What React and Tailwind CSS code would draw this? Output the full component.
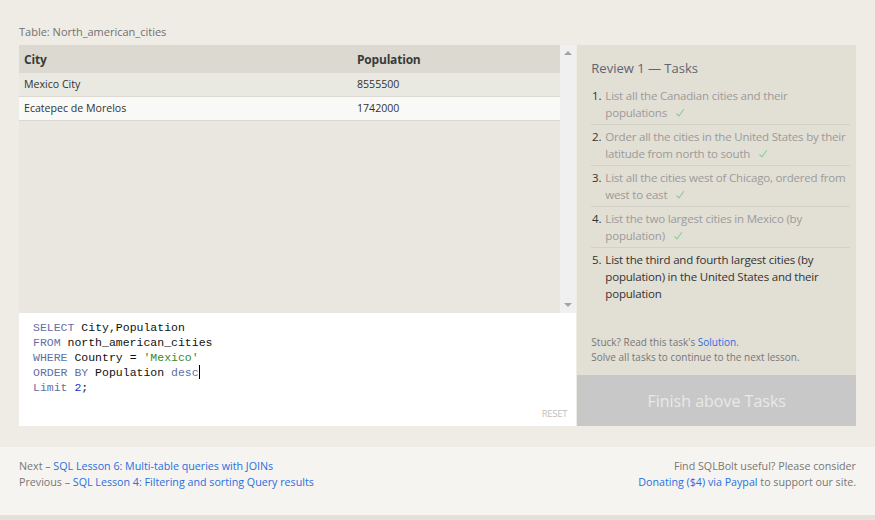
const tasks = [
    { lines: ["List all the Canadian cities and their", "populations"], done: true },
    { lines: ["Order all the cities in the United States by their", "latitude from north to south"], done: true },
    { lines: ["List all the cities west of Chicago, ordered from", "west to east"], done: true },
    { lines: ["List the two largest cities in Mexico (by", "population)"], done: true },
    { lines: ["List the third and fourth largest cities (by", "population) in the United States and their", "population"], done: false },
];

const rows = [
    { city: "Mexico City", pop: "8555500" },
    { city: "Ecatepec de Morelos", pop: "1742000" },
];

function Kw({ children }) {
    return <span className="text-[#6470a4]">{children}</span>;
}

function Check() {
    return (
        <svg viewBox="0 0 10 10" className="inline-block w-[10px] h-[10px] ml-[8px] align-[-1px]">
            <path d="M1.5 5.5 L4 8 L8.8 1.2" fill="none" stroke="#86cf95" strokeWidth="1.1" />
        </svg>
    );
}

export default function App() {
    return (
        <div className="w-[875px] h-[520px] bg-[#efede6] font-['Open_Sans','Noto_Sans',sans-serif] flex flex-col overflow-hidden">
            <div className="h-[447px] bg-[#efece5] rounded-bl-[6px] px-[19px] pt-[24px]">
                <div className="text-[11px] text-[#707070] leading-[16px] mb-[5px]">Table: North_american_cities</div>

                <div className="flex">
                    {/* Left: results + editor */}
                    <div className="w-[558px] flex flex-col">
                        <div className="h-[268px] bg-[#e9e7df] flex">
                            <div className="flex-1">
                                <div className="flex h-[28px] pt-px items-center bg-[#dcdad0] text-[12px] font-bold text-[#3a3a3a] tracking-[-0.2px]">
                                    <div className="w-[338px] pl-[5px]">City</div>
                                    <div className="flex-1">Population</div>
                                </div>
                                {rows.map((r, i) => (
                                    <div
                                        key={r.city}
                                        className={
                                            "flex h-[24px] items-center text-[10.6px] text-[#333] border-b border-[#dad8d0] " +
                                            (i % 2 === 1 ? "bg-[#f9f9f8]" : "bg-[#e9e8e1]")
                                        }
                                    >
                                        <div className="w-[338px] pl-[5px]">{r.city}</div>
                                        <div className="flex-1">{r.pop}</div>
                                    </div>
                                ))}
                            </div>
                            <div className="w-[16px] bg-[#f0f0f0] flex flex-col justify-between items-center py-[6px]">
                                <div className="w-0 h-0 border-x-[4px] border-x-transparent border-b-[4px] border-b-[#a3a3a3]"></div>
                                <div className="w-0 h-0 border-x-[4px] border-x-transparent border-t-[4px] border-t-[#a3a3a3]"></div>
                            </div>
                        </div>

                        <div className="h-[113px] bg-white relative pl-[14px] pt-[7px] font-['Liberation_Mono','DejaVu_Sans_Mono',monospace] text-[11.5px] leading-[15px] text-[#111]">
                            <div><Kw>SELECT</Kw> City,Population</div>
                            <div><Kw>FROM</Kw> north_american_cities</div>
                            <div><Kw>WHERE</Kw> Country = <span className="text-[#3a8a2a]">'Mexico'</span></div>
                            <div>
                                <Kw>ORDER BY</Kw> Population <Kw>desc</Kw>
                                <span className="inline-block w-px h-[14px] bg-black align-middle -mt-[2px]"></span>
                            </div>
                            <div><Kw>Limit</Kw> <span className="text-[#2323d8]">2</span>;</div>
                            <div className="absolute right-[9px] bottom-[5px] font-['Open_Sans',sans-serif] text-[9.5px] text-[#c0c0c0] tracking-tight">RESET</div>
                        </div>
                    </div>

                    {/* Right: tasks */}
                    <div className="w-[279px] ml-px flex flex-col">
                        <div className="h-[330px] bg-[#e2dfd5] pl-[14px] pr-[6px] pt-[14px] flex flex-col">
                            <div className="text-[13px] text-[#5f6474] leading-[18px] mb-[7px]">Review 1 — Tasks</div>
                            <ol>
                                {tasks.map((t, i) => (
                                    <li
                                        key={i}
                                        className={
                                            "flex text-[11.5px] leading-[17px] py-[3px] tracking-[-0.2px] " +
                                            (i < tasks.length - 1 ? "border-b border-[#d3d0c6]" : "")
                                        }
                                    >
                                        <span className="w-[14px] text-right pr-[2px] text-[#333] shrink-0 -ml-[2px]">{i + 1}.</span>
                                        <span className={"pl-[2px] whitespace-nowrap " + (t.done ? "text-[#9b9b9b]" : "text-[#333]")}>
                                            {t.lines.map((l, j) => (
                                                <div key={j}>
                                                    {l}
                                                    {t.done && j === t.lines.length - 1 && <Check />}
                                                </div>
                                            ))}
                                        </span>
                                    </li>
                                ))}
                            </ol>
                            <div className="mt-auto pb-[10px] text-[10px] leading-[15px] text-[#777]">
                                <div>Stuck? Read this task's <span className="text-[#2a6ee0]">Solution</span>.</div>
                                <div>Solve all tasks to continue to the next lesson.</div>
                            </div>
                        </div>
                        <div className="h-[51px] bg-[#c8c8c8] flex items-center justify-center text-[16px] text-[#e9e9e9]">
                            Finish above Tasks
                        </div>
                    </div>
                </div>
            </div>

            <div className="h-[68px] bg-[#f5f4f0] px-[19px] pt-[11px] flex justify-between text-[10.7px] leading-[16px] text-[#777]">
                <div>
                    <div>Next – <span className="text-[#2a6ee0]">SQL Lesson 6: Multi-table queries with JOINs</span></div>
                    <div>Previous – <span className="text-[#2a6ee0]">SQL Lesson 4: Filtering and sorting Query results</span></div>
                </div>
                <div className="text-right">
                    <div>Find SQLBolt useful? Please consider</div>
                    <div><span className="text-[#2a6ee0]">Donating ($4) via Paypal</span> to support our site.</div>
                </div>
            </div>
            <div className="flex-1 bg-[#e4e1db]"></div>
        </div>
    );
}
